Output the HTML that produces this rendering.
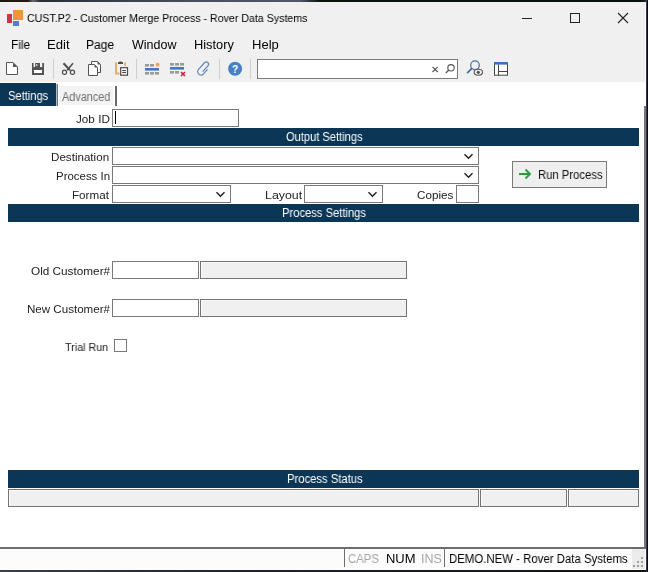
<!DOCTYPE html>
<html><head><meta charset="utf-8">
<style>
*{box-sizing:border-box;margin:0;padding:0}
html,body{width:648px;height:572px;overflow:hidden;background:#f0f0f0;font-family:"Liberation Sans",sans-serif;color:#222}
.a{position:absolute}
.t{position:absolute;white-space:nowrap;line-height:normal;transform-origin:0 0;will-change:transform}
.inp{position:absolute;background:#fff;border:1px solid #7a7a7a}
.ro{position:absolute;background:#f0f0f0;border:1px solid #747474;box-shadow:inset 1px 1px 0 #f9f9f9}
.bar{position:absolute;left:8px;width:631px;height:18px;background:#0b3656}
.sep{position:absolute;top:59px;width:1px;height:21px;background:#d0d0d0}
svg{position:absolute;overflow:visible}
</style></head><body>
<!-- desktop strip + right edge -->
<div class="a" style="left:0;top:0;width:648px;height:2px;background:linear-gradient(90deg,#1c1a10 0,#241a12 28px,#6a6a6a 33px,#2a2e36 40px,#3a404c 120px,#4c5262 220px,#50586a 300px,#0c120c 320px,#0a100c 640px,#303438 648px)"></div>

<!-- app icon -->
<div class="a" style="left:7px;top:14px;width:5px;height:9px;background:#d9304a"></div>
<div class="a" style="left:13px;top:10px;width:10px;height:10px;background:#f0953a"></div>
<div class="a" style="left:13px;top:21px;width:6px;height:5px;background:#4a86c5"></div>

<!-- window controls -->
<div class="a" style="left:522px;top:18px;width:10px;height:1px;background:#222"></div>
<div class="a" style="left:570px;top:13px;width:10px;height:10px;border:1px solid #222"></div>
<svg style="left:0;top:0" width="648" height="40"><path d="M618 13L628 23M628 13L618 23" stroke="#222" stroke-width="1.1" fill="none"/></svg>

<!-- toolbar icons -->
<svg style="left:0;top:0" width="648" height="82">
 <!-- new -->
 <path d="M6.5 62.5H13L17.5 67V74.5H6.5Z" fill="#fff" stroke="#555" stroke-width="1"/>
 <path d="M13 62.5V67H17.5Z" fill="#555"/>
 <!-- save -->
 <rect x="32" y="63" width="12" height="12" fill="#555"/>
 <rect x="33.6" y="63" width="1.6" height="4" fill="#f4f4f4"/>
 <rect x="40" y="63" width="2.2" height="4" fill="#f4f4f4"/>
 <rect x="36.3" y="64" width="1" height="2" fill="#f4f4f4"/>
 <rect x="34" y="70" width="8" height="3" fill="#fff"/>
 <!-- sep -->
 <rect x="53" y="59" width="1" height="20" fill="#cfcfcf"/>
 <!-- scissors -->
 <path d="M63.5 63.2L70 70.2" stroke="#505050" stroke-width="2" fill="none"/>
 <path d="M73 63.2L67.2 70.2" stroke="#505050" stroke-width="1.6" fill="none"/>
 <circle cx="64.5" cy="72.3" r="2.1" fill="none" stroke="#505050" stroke-width="1.2"/>
 <circle cx="72.5" cy="72.3" r="2.1" fill="none" stroke="#505050" stroke-width="1.2"/>
 <!-- copy -->
 <path d="M91.5 64V61.5H97.5L100.5 64.5V72.5H97.5" fill="#fff" stroke="#555" stroke-width="1"/>
 <path d="M97.5 61.5V64.5H100.5Z" fill="#555"/>
 <path d="M88.5 64.5H94.5L97.5 67.5V75.5H88.5Z" fill="#fff" stroke="#555" stroke-width="1"/>
 <path d="M94.5 64.5V67.5H97.5Z" fill="#555"/>
 <!-- paste -->
 <path d="M116 62.2V73.6H119.5" fill="none" stroke="#e6ac70" stroke-width="2"/>
 <path d="M125.1 62.2V66" fill="none" stroke="#dcb488" stroke-width="1.8"/>
 <path d="M118 64V62.4Q120.5 60.4 123 62.4V64Z" fill="#4a4a4a"/>
 <rect x="120.7" y="67.7" width="6.8" height="7.5" fill="#fff" stroke="#4a4a4a" stroke-width="1.2"/>
 <rect x="122.2" y="70" width="3.8" height="1.1" fill="#4a4a4a"/>
 <rect x="122.2" y="72" width="3.8" height="1.1" fill="#4a4a4a"/>
 <!-- sep -->
 <rect x="136" y="59" width="1" height="20" fill="#cfcfcf"/>
 <!-- insert row -->
 <rect x="145" y="64" width="4" height="2.6" fill="#9a9a96"/>
 <rect x="150" y="64" width="4" height="2.6" fill="#9a9a96"/>
 <circle cx="157.6" cy="64.8" r="2" fill="#f2a452"/>
 <rect x="145" y="68" width="14" height="2.6" fill="#4277c2"/>
 <rect x="145" y="72" width="4" height="2.6" fill="#9a9a96"/>
 <rect x="150" y="72" width="4" height="2.6" fill="#9a9a96"/>
 <rect x="155" y="72" width="4" height="2.6" fill="#9a9a96"/>
 <!-- delete row -->
 <rect x="170" y="63" width="4" height="2.6" fill="#9a9a96"/>
 <rect x="175" y="63" width="4" height="2.6" fill="#9a9a96"/>
 <rect x="180" y="63" width="4" height="2.6" fill="#9a9a96"/>
 <rect x="170" y="67" width="14" height="2.6" fill="#4277c2"/>
 <rect x="170" y="71" width="4" height="2.6" fill="#9a9a96"/>
 <rect x="175" y="71" width="4" height="2.6" fill="#9a9a96"/>
 <path d="M181 72L185 76M185 72L181 76" stroke="#d0203a" stroke-width="1.6"/>
 <!-- paperclip -->
 <g transform="translate(204 68.3) rotate(42) scale(1.3)">
  <path d="M2.6 -1.2V3.4A2.6 2.6 0 0 1 -2.6 3.4V-3.4A1.8 1.8 0 0 1 1 -3.4V2.6" fill="none" stroke="#6286b8" stroke-width="0.95"/>
 </g>
 <!-- sep -->
 <rect x="219" y="59" width="1" height="20" fill="#cfcfcf"/>
 <!-- help -->
 <circle cx="235.1" cy="68.8" r="7" fill="#4680c6"/>
 <text x="235.1" y="72.9" text-anchor="middle" font-family="Liberation Sans" font-weight="700" font-size="10" fill="#fff">?</text>
 <!-- sep -->
 <rect x="250" y="59" width="1" height="20" fill="#cfcfcf"/>
 <!-- search box -->
 <rect x="257.5" y="59.5" width="200" height="19" fill="#fff" stroke="#7a7a7a" stroke-width="1"/>
 <path d="M432.5 66.8L437.8 72M437.8 66.8L432.5 72" stroke="#555" stroke-width="1.1"/>
 <circle cx="451" cy="67.8" r="3.2" fill="none" stroke="#555" stroke-width="1.1"/>
 <path d="M448.8 70L445.8 73" stroke="#555" stroke-width="1.2"/>
 <!-- find eye -->
 <circle cx="475" cy="65.2" r="4.3" fill="none" stroke="#4c6d9e" stroke-width="1.2"/>
 <path d="M471.6 68.6L467.6 72.6" stroke="#4a70a8" stroke-width="1.9" stroke-linecap="round"/>
 <ellipse cx="478.3" cy="72.3" rx="4.2" ry="3" fill="#f0f0f0" stroke="#555" stroke-width="1.1"/>
 <circle cx="478.3" cy="72.3" r="1.6" fill="#555"/>
 <!-- layout -->
 <rect x="494.5" y="62.5" width="13" height="12.7" fill="#fff" stroke="#444" stroke-width="1"/>
 <rect x="494" y="62" width="14" height="2.6" fill="#3a6fc0"/>
 <rect x="498" y="64.5" width="1" height="11" fill="#444"/>
 <rect x="498" y="71" width="10" height="1" fill="#444"/>
</svg>

<!-- content white -->
<div class="a" style="left:0;top:82px;width:646px;height:465px;background:#fff"></div>
<div class="a" style="left:644px;top:106px;width:2px;height:441px;background:#76767e"></div>

<!-- tabs -->
<div class="a" style="left:0;top:83px;width:56px;height:23px;background:#0b3656"></div>
<div class="a" style="left:56px;top:84px;width:1px;height:22px;background:#a9b9c9"></div>
<div class="a" style="left:57px;top:84px;width:1px;height:22px;background:#6f7780"></div>
<div class="a" style="left:59px;top:86px;width:54px;height:19px;background:#f3f3f3"></div>
<div class="a" style="left:115px;top:86px;width:2px;height:20px;background:#6a6a6a"></div>

<!-- job id -->
<div class="inp" style="left:112px;top:109px;width:127px;height:18px"></div>
<div class="a" style="left:115px;top:111px;width:1px;height:13px;background:#000"></div>

<div class="bar" style="top:128px"></div>

<div class="inp" style="left:112px;top:147px;width:367px;height:18px"></div>
<div class="inp" style="left:112px;top:166px;width:367px;height:18px"></div>
<div class="inp" style="left:112px;top:185px;width:119px;height:18px"></div>
<div class="inp" style="left:304px;top:185px;width:79px;height:18px"></div>
<div class="inp" style="left:456px;top:185px;width:23px;height:18px"></div>
<svg style="left:0;top:0" width="648" height="210">
 <path d="M464.5 154.3L468.5 158.3L472.5 154.3" fill="none" stroke="#222" stroke-width="1.5"/>
 <path d="M464.5 173.3L468.5 177.3L472.5 173.3" fill="none" stroke="#222" stroke-width="1.5"/>
 <path d="M216.5 192.3L220.5 196.3L224.5 192.3" fill="none" stroke="#222" stroke-width="1.5"/>
 <path d="M368.5 192.3L372.5 196.3L376.5 192.3" fill="none" stroke="#222" stroke-width="1.5"/>
</svg>

<!-- run process button -->
<div class="a" style="left:512px;top:161px;width:95px;height:27px;background:#efefef;border:1px solid #7a7a7a"></div>
<svg style="left:0;top:0" width="648" height="200">
 <path d="M519 174H530M525.5 169.5L530 174L525.5 178.5" fill="none" stroke="#2a9a3c" stroke-width="1.8"/>
</svg>

<div class="bar" style="top:204px"></div>

<div class="inp" style="left:112px;top:261px;width:87px;height:18px"></div>
<div class="ro" style="left:200px;top:261px;width:207px;height:18px"></div>
<div class="inp" style="left:112px;top:299px;width:87px;height:18px"></div>
<div class="ro" style="left:200px;top:299px;width:207px;height:18px"></div>
<div class="inp" style="left:114px;top:339px;width:13px;height:13px;border-color:#7a7a7a"></div>

<div class="bar" style="top:470px"></div>
<div class="ro" style="left:8px;top:489px;width:471px;height:18px"></div>
<div class="ro" style="left:480px;top:489px;width:87px;height:18px"></div>
<div class="ro" style="left:568px;top:489px;width:71px;height:18px"></div>

<!-- status bar -->
<div class="a" style="left:0;top:547px;width:646px;height:2px;background:#6c6c6c"></div>
<div class="a" style="left:0;top:549px;width:646px;height:21px;background:#fcfcfc"></div>
<div class="a" style="left:344px;top:549px;width:1px;height:18px;background:#6e6e6e"></div>
<div class="a" style="left:444px;top:549px;width:1px;height:18px;background:#6e6e6e"></div>
<div class="a" style="left:632px;top:549px;width:13px;height:20px;background:#ececec"></div>
<svg style="left:0;top:0" width="648" height="572">
 <rect x="641" y="557" width="2" height="2" fill="#a0a0a0"/>
 <rect x="637" y="561" width="2" height="2" fill="#a0a0a0"/>
 <rect x="641" y="561" width="2" height="2" fill="#a0a0a0"/>
 <rect x="633" y="565" width="2" height="2" fill="#a0a0a0"/>
 <rect x="637" y="565" width="2" height="2" fill="#a0a0a0"/>
 <rect x="641" y="565" width="2" height="2" fill="#a0a0a0"/>
</svg>
<div class="a" style="left:0;top:570px;width:648px;height:2px;background:linear-gradient(90deg,#3a4048 0,#2a3038 120px,#1a2026 324px,#101410 648px)"></div>
<div class="a" style="left:645px;top:2px;width:1px;height:104px;background:#fbfbff"></div>
<div class="a" style="left:646px;top:0;width:1px;height:572px;background:#3a3a46"></div>
<div class="a" style="left:647px;top:0;width:1px;height:572px;background:#0c0c16"></div>

<div class="t" style="left:27.08px;top:12px;font-size:11.5px;color:#000;transform:scaleX(0.9238)">CUST.P2 - Customer Merge Process - Rover Data Systems</div>
<div class="t" style="left:11.05px;top:38px;font-size:12.5px;color:#000;transform:scaleX(0.9474)">File</div>
<div class="t" style="left:46.95px;top:38px;font-size:12.5px;color:#000;transform:scaleX(1.0500)">Edit</div>
<div class="t" style="left:86.04px;top:38px;font-size:12.5px;color:#000;transform:scaleX(0.9643)">Page</div>
<div class="t" style="left:132.00px;top:38px;font-size:12.5px;color:#000;transform:scaleX(1.0000)">Window</div>
<div class="t" style="left:193.97px;top:38px;font-size:12.5px;color:#000;transform:scaleX(1.0263)">History</div>
<div class="t" style="left:251.96px;top:38px;font-size:12.5px;color:#000;transform:scaleX(1.0417)">Help</div>
<div class="t" style="left:8.07px;top:89px;font-size:12px;color:#fff;transform:scaleX(0.9286)">Settings</div>
<div class="t" style="left:62.00px;top:90px;font-size:12px;color:#6e6e6e;transform:scaleX(0.9057)">Advanced</div>
<div class="t" style="left:76.00px;top:113px;font-size:11px;color:#222;transform:scaleX(1.0645)">Job ID</div>
<div class="t" style="left:286.07px;top:130px;font-size:12px;color:#fff;transform:scaleX(0.9259)">Output Settings</div>
<div class="t" style="left:50.94px;top:151px;font-size:11px;color:#222;transform:scaleX(1.0556)">Destination</div>
<div class="t" style="left:55.96px;top:170px;font-size:11px;color:#222;transform:scaleX(1.0400)">Process In</div>
<div class="t" style="left:71.94px;top:189px;font-size:11px;color:#222;transform:scaleX(1.0588)">Format</div>
<div class="t" style="left:264.88px;top:189px;font-size:11px;color:#222;transform:scaleX(1.1250)">Layout</div>
<div class="t" style="left:416.94px;top:189px;font-size:11px;color:#222;transform:scaleX(1.0606)">Copies</div>
<div class="t" style="left:538.06px;top:168px;font-size:12px;color:#111;transform:scaleX(0.9403)">Run Process</div>
<div class="t" style="left:282.07px;top:206px;font-size:12px;color:#fff;transform:scaleX(0.9326)">Process Settings</div>
<div class="t" style="left:30.93px;top:265px;font-size:11px;color:#222;transform:scaleX(1.0694)">Old Customer#</div>
<div class="t" style="left:26.95px;top:303px;font-size:11px;color:#222;transform:scaleX(1.0519)">New Customer#</div>
<div class="t" style="left:65.00px;top:341px;font-size:11px;color:#222;transform:scaleX(0.9773)">Trial Run</div>
<div class="t" style="left:287.06px;top:472px;font-size:12px;color:#fff;transform:scaleX(0.9367)">Process Status</div>
<div class="t" style="left:348.09px;top:552px;font-size:12.5px;color:#a6a6a6;transform:scaleX(0.9091)">CAPS</div>
<div class="t" style="left:385.96px;top:552px;font-size:12.5px;color:#000;transform:scaleX(1.0370)">NUM</div>
<div class="t" style="left:421.00px;top:552px;font-size:12.5px;color:#a6a6a6;transform:scaleX(1.0000)">INS</div>
<div class="t" style="left:449.09px;top:552px;font-size:12.5px;color:#000;transform:scaleX(0.9124)">DEMO.NEW - Rover Data Systems</div>
</body></html>
